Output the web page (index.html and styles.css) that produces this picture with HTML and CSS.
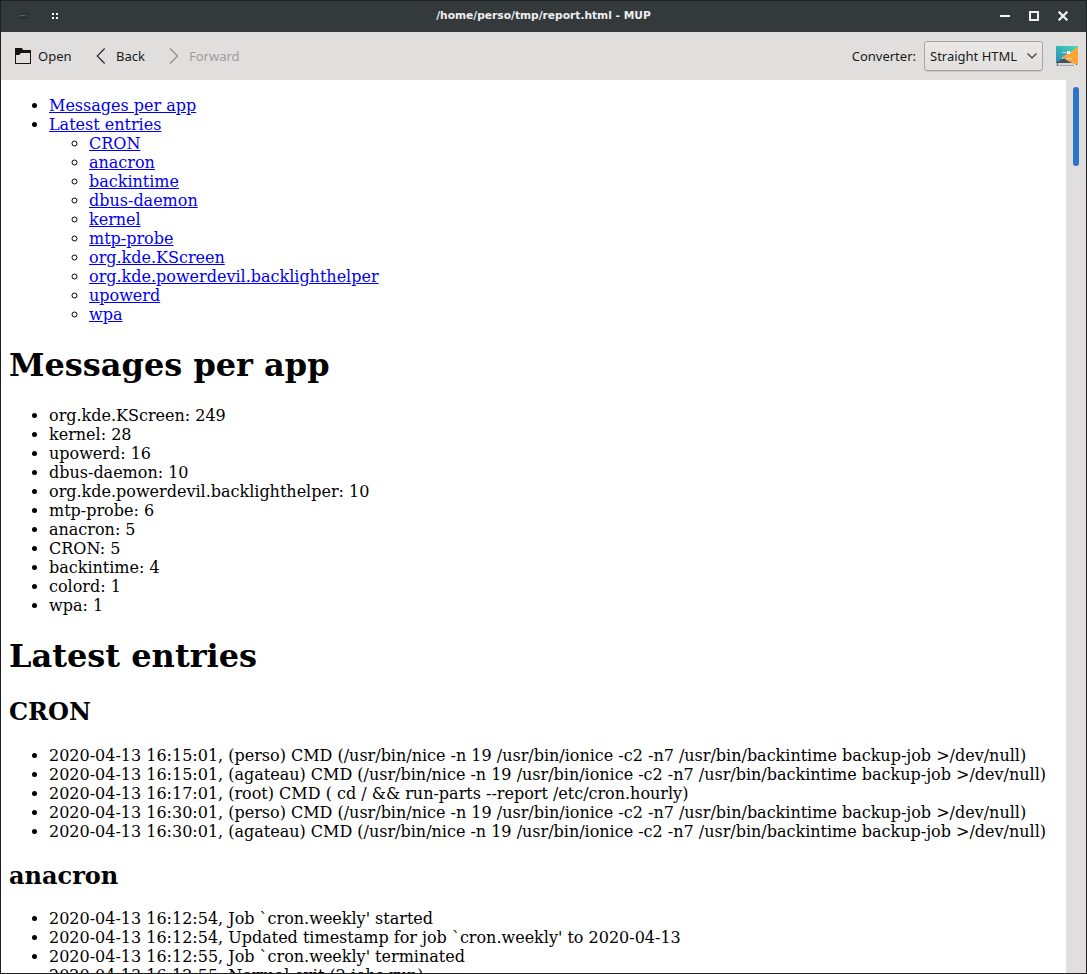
FILE: index.html
```html
<!DOCTYPE html>
<html lang="en">
<head>
<meta charset="utf-8">
<title>/home/perso/tmp/report.html - MUP</title>
<link rel="stylesheet" href="styles.css">
</head>
<body>
<div class="window">
  <header class="titlebar">
    <div class="title-left">
      <svg class="app-icon" width="12" height="12" viewBox="0 0 12 12" shape-rendering="crispEdges"><path d="M0 0h5v1H0zM1 10h6v1H1z" fill="#2a3640"/><path d="M0 3h10v1H0zM0 7h10v1H0zM0 8h7v1H0z" fill="#272e36"/><path d="M0 5h5v1H0z" fill="#59666f"/></svg>
      <svg class="dots" width="6" height="6" viewBox="0 0 6 6"><path d="M0 0h2v2H0zM4 0h2v2H4zM0 4h2v2H0zM4 4h2v2H4z" fill="#fcfcfc"/></svg>
    </div>
    <div class="title">/home/perso/tmp/report.html - MUP</div>
    <div class="title-right">
      <svg width="10" height="10" viewBox="0 0 10 10"><path d="M0 4h10v2H0z" fill="#f2f2f2"/></svg>
      <svg width="10" height="10" viewBox="0 0 10 10"><path d="M1 1h8v8H1z" fill="none" stroke="#f2f2f2" stroke-width="2"/></svg>
      <svg width="10" height="10" viewBox="0 0 10 10"><path d="M.6.600l8.800 8.800M9.400.600L.6 9.400" stroke="#f2f2f2" stroke-width="2.200"/></svg>
    </div>
  </header>
  <nav class="toolbar">
    <div class="tool open"><svg width="16" height="16" viewBox="0 0 16 16"><path d="M0 0h7l1 2h8v14H0zM1 7v8h14V5H6L4 7z" fill="#141414" fill-rule="evenodd"/></svg><span>Open</span></div>
    <div class="tool back"><svg width="10" height="16" viewBox="0 0 10 16"><path d="M8.700.500L1.200 8l7.500 7.500" fill="none" stroke="#232323" stroke-width="1.100"/></svg><span>Back</span></div>
    <div class="tool forward"><svg width="10" height="16" viewBox="0 0 10 16"><path d="M1 .500L8.500 8 1 15.500" fill="none" stroke="#8d8c8b" stroke-width="1.100"/></svg><span>Forward</span></div>
    <div class="converter">
      <span>Converter:</span>
      <div class="combo"><span>Straight HTML</span><svg width="10" height="6" viewBox="0 0 10 6"><path d="M.5.500L5 5 9.500.500" fill="none" stroke="#333" stroke-width="1.100"/></svg></div>
      <svg class="settings" width="22" height="20" viewBox="0 0 22 20">
        <defs><linearGradient id="sky" x1="0" y1="1" x2="1" y2="0"><stop offset="0" stop-color="#2e8bb0"/><stop offset="1" stop-color="#42dcc0"/></linearGradient></defs>
        <path d="M0 0h22v17H0z" fill="url(#sky)"/>
        <path d="M22 1v17h-5L5 12z" fill="#fda636"/>
        <path d="M0 17l7-5 5 3 4 2z" fill="#465158"/>
        <path d="M6 6.500h10M6 12.500h10" stroke="#b7d9c8" stroke-width="1"/>
        <path d="M11 5h3v3h-3z" fill="#f5f8ee"/><path d="M7 11h3v2H7z" fill="#9fa9a9"/>
        <path d="M1 17h17v2H1z" fill="#d5d9d9"/><path d="M0 19.500h18" stroke="#9baaaf"/><path d="M1 17h1v2H1zM20 18h1v1h-1z" fill="#555"/><path d="M17 17h5v1h-5z" fill="#fda636"/>
      </svg>
    </div>
  </nav>
  <div class="content">
    <main class="page">
      <ul>
        <li><a href="#messages">Messages per app</a></li>
        <li><a href="#latest">Latest entries</a>
          <ul>
            <li><a href="#cron">CRON</a></li>
            <li><a href="#anacron">anacron</a></li>
            <li><a href="#backintime">backintime</a></li>
            <li><a href="#dbus">dbus-daemon</a></li>
            <li><a href="#kernel">kernel</a></li>
            <li><a href="#mtp">mtp-probe</a></li>
            <li><a href="#kscreen">org.kde.KScreen</a></li>
            <li><a href="#backlight">org.kde.powerdevil.backlighthelper</a></li>
            <li><a href="#upowerd">upowerd</a></li>
            <li><a href="#wpa">wpa</a></li>
          </ul>
        </li>
      </ul>
      <h1 id="messages">Messages per app</h1>
      <ul>
        <li>org.kde.KScreen: 249</li>
        <li>kernel: 28</li>
        <li>upowerd: 16</li>
        <li>dbus-daemon: 10</li>
        <li>org.kde.powerdevil.backlighthelper: 10</li>
        <li>mtp-probe: 6</li>
        <li>anacron: 5</li>
        <li>CRON: 5</li>
        <li>backintime: 4</li>
        <li>colord: 1</li>
        <li>wpa: 1</li>
      </ul>
      <h1 id="latest">Latest entries</h1>
      <h2 id="cron">CRON</h2>
      <ul>
        <li>2020-04-13 16:15:01, (perso) CMD (/usr/bin/nice -n 19 /usr/bin/ionice -c2 -n7 /usr/bin/backintime backup-job &gt;/dev/null)</li>
        <li>2020-04-13 16:15:01, (agateau) CMD (/usr/bin/nice -n 19 /usr/bin/ionice -c2 -n7 /usr/bin/backintime backup-job &gt;/dev/null)</li>
        <li>2020-04-13 16:17:01, (root) CMD ( cd / &amp;&amp; run-parts --report /etc/cron.hourly)</li>
        <li>2020-04-13 16:30:01, (perso) CMD (/usr/bin/nice -n 19 /usr/bin/ionice -c2 -n7 /usr/bin/backintime backup-job &gt;/dev/null)</li>
        <li>2020-04-13 16:30:01, (agateau) CMD (/usr/bin/nice -n 19 /usr/bin/ionice -c2 -n7 /usr/bin/backintime backup-job &gt;/dev/null)</li>
      </ul>
      <h2 id="anacron">anacron</h2>
      <ul>
        <li>2020-04-13 16:12:54, Job `cron.weekly' started</li>
        <li>2020-04-13 16:12:54, Updated timestamp for job `cron.weekly' to 2020-04-13</li>
        <li>2020-04-13 16:12:55, Job `cron.weekly' terminated</li>
        <li>2020-04-13 16:12:55, Normal exit (2 jobs run)</li>
      </ul>
    </main>
    <div class="scrollbar"><div class="thumb"></div></div>
  </div>
</div>
</body>
</html>
```
FILE: styles.css
```css
* { box-sizing: border-box; }
body { margin: 0; overflow: hidden; }
svg { display: block; flex: none; }
.window {
  width: 1087px; height: 974px;
  border: 1px solid #1e2023;
  display: flex; flex-direction: column;
  overflow: hidden;
  background: #e0dfdd;
}
.titlebar {
  height: 31px; flex: none;
  display: grid; grid-template-columns: 1fr auto 1fr;
  align-items: center;
  background: #343a3c;
}
.title-left { display: flex; align-items: center; gap: 20px; padding-left: 19px; padding-bottom: 1px; }
.title {
  font: bold 10.67px/30px "DejaVu Sans", sans-serif;
  color: #efefef;
  padding-bottom: 1px;
  white-space: nowrap;
}
.title-right { display: flex; justify-content: flex-end; gap: 19px; padding-right: 18px; padding-bottom: 1px; }
.toolbar {
  height: 48px; flex: none;
  display: flex; align-items: center;
  padding: 0 8px 0 14px;
  font: 13px/18px "Noto Sans", sans-serif;
  color: #1a1a1a;
}
.tool { display: flex; align-items: center; }
.open { gap: 7px; }
.back { gap: 10.5px; margin-left: 24px; }
.forward { gap: 10px; margin-left: 24px; color: #9d9c9b; }
.converter { margin-left: auto; display: flex; align-items: center; }
.combo {
  width: 119px; height: 30px;
  margin-left: 8px;
  padding: 0 5px;
  display: flex; align-items: center; justify-content: space-between;
  border: 1px solid #a6a5a4; border-radius: 3px;
  background: linear-gradient(#eae9e8, #e1e0de);
  box-shadow: 0 1px 0 #cccbc9;
}
.settings { margin-left: 13px; }
.content { flex: 1; min-height: 0; display: flex; }
.page {
  flex: 1; min-width: 0; overflow: hidden;
  padding: 0 8px;
  background: #fff; color: #000;
  font: 16px/19px "DejaVu Serif", serif;
  letter-spacing: -0.006px;
}
.page ul { margin: 16px 0; padding-left: 40px; }
.page ul ul { margin: 0; }
.page li { white-space: nowrap; }
.page a { color: #0000ee; text-decoration: underline; }
.page h1 { font-size: 32px; line-height: 38px; margin: 22px 0; }
.page h2 { font-size: 24px; line-height: 28px; margin: 21px 0 19px; }
.page h1 + h2 { margin: 23px 0 20px; }
.scrollbar { width: 20px; flex: none; padding: 7px 0 0 7px; }
.thumb { width: 6px; height: 79px; border-radius: 3px; background: #2d73c8; }
```
